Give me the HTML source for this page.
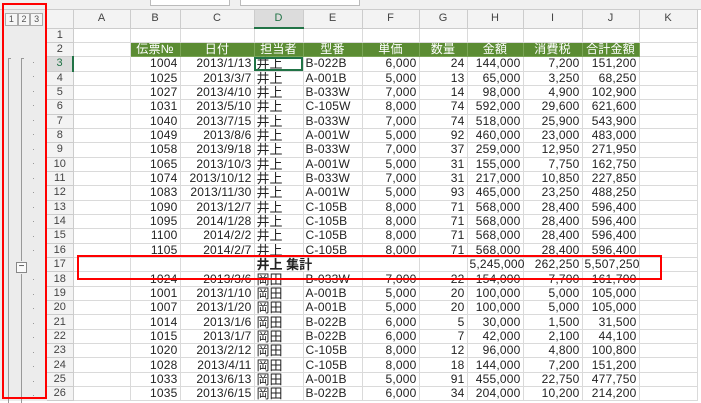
<!DOCTYPE html><html><head><meta charset="utf-8"><style>
*{margin:0;padding:0;box-sizing:border-box}
body{width:701px;height:401px;overflow:hidden;background:#fff;position:relative;font-family:"Liberation Sans","Noto Sans CJK JP",sans-serif;font-size:12px;color:#222}
#top{position:absolute;left:0;top:0;width:701px;height:10px;background:#f0f0f0;border-bottom:1px solid #ccc}
#pane{position:absolute;left:0;top:10px;width:47px;height:391px;background:#ececec}
table{position:absolute;left:47px;top:10px;width:650px;border-collapse:collapse;table-layout:fixed}
td{border-right:1px solid #dadada;border-bottom:1px solid #dadada;height:14.35px;padding:0 2px;white-space:nowrap;overflow:visible;text-align:right;line-height:13px;letter-spacing:0.2px}
tr.h td{height:18px;background:#f3f3f3;text-align:center;color:#444;border-color:#ccc;font-size:11px;letter-spacing:0}
td.rh{background:#f3f3f3;text-align:center;color:#444;border-color:#ccc;font-size:11px;letter-spacing:0}
tr.g td.c{background:#5b8c33;color:#fff;text-align:center;border-color:#7aa556;font-size:12px}
td.d{text-align:left;font-size:13px;letter-spacing:0}
td.e{text-align:left}
.red{position:absolute;border:2px solid #f00}
.dot{position:absolute;left:33px;width:1px;height:1px;background:#999}
</style></head><body>
<div id="top"><div style="position:absolute;left:240px;top:0;width:120px;height:6px;border:1px solid #bbb;border-top:0;background:#fff"></div><div style="position:absolute;left:150px;top:0;width:80px;height:6px;border:1px solid #bbb;border-top:0;background:#fff"></div></div>
<div id="pane">
<div style="position:absolute;left:5px;top:3px;width:38px;height:13px;font-size:9px;color:#555;display:flex"><span style="flex:1;border:1px solid #aaa;text-align:center;background:#f6f6f6">1</span><span style="flex:1;border:1px solid #aaa;text-align:center;background:#f6f6f6">2</span><span style="flex:1;border:1px solid #aaa;text-align:center;background:#f6f6f6">3</span></div>
<div style="position:absolute;left:8px;top:48px;width:3px;height:345px;border-left:1px solid #999;border-top:1px solid #999"></div>
<div style="position:absolute;left:21px;top:48px;width:3px;height:203px;border-left:1px solid #999;border-top:1px solid #999"></div>
<div style="position:absolute;left:16px;top:252px;width:11px;height:11px;border:1px solid #888;background:#fafafa;font-size:10px;line-height:8px;text-align:center">−</div>
<div style="position:absolute;left:21px;top:264px;width:1px;height:129px;background:#999"></div>
<div class="dot" style="top:52px"></div><div class="dot" style="top:66px"></div><div class="dot" style="top:81px"></div><div class="dot" style="top:95px"></div><div class="dot" style="top:110px"></div><div class="dot" style="top:124px"></div><div class="dot" style="top:139px"></div><div class="dot" style="top:153px"></div><div class="dot" style="top:168px"></div><div class="dot" style="top:182px"></div><div class="dot" style="top:197px"></div><div class="dot" style="top:211px"></div><div class="dot" style="top:226px"></div><div class="dot" style="top:240px"></div><div class="dot" style="top:269px"></div><div class="dot" style="top:284px"></div><div class="dot" style="top:298px"></div><div class="dot" style="top:313px"></div><div class="dot" style="top:327px"></div><div class="dot" style="top:342px"></div><div class="dot" style="top:356px"></div><div class="dot" style="top:371px"></div><div class="dot" style="top:385px"></div>
</div>
<table>
<colgroup><col style="width:26px"><col style="width:57px"><col style="width:50px"><col style="width:74px"><col style="width:49px"><col style="width:59px"><col style="width:57px"><col style="width:48px"><col style="width:56px"><col style="width:59px"><col style="width:57px"><col style="width:58px"></colgroup>
<tr class="h"><td></td><td>A</td><td>B</td><td>C</td><td style="background:#dcdcdc;border-bottom:2px solid #217346;color:#217346">D</td><td>E</td><td>F</td><td>G</td><td>H</td><td>I</td><td>J</td><td>K</td></tr>
<tr><td class="rh">1</td><td></td><td></td><td></td><td></td><td></td><td></td><td></td><td></td><td></td><td></td><td></td></tr>
<tr class="g"><td class="rh">2</td><td></td><td class="c">伝票№</td><td class="c">日付</td><td class="c">担当者</td><td class="c">型番</td><td class="c">単価</td><td class="c">数量</td><td class="c">金額</td><td class="c">消費税</td><td class="c">合計金額</td><td></td></tr>
<tr><td class="rh" style="background:#dcdcdc;color:#217346;border-right:2px solid #217346">3</td><td></td><td>1004</td><td>2013/1/13</td><td class="d" style="outline:2px solid #217346;outline-offset:-2px">井上</td><td class="e">B-022B</td><td>6,000</td><td>24</td><td>144,000</td><td>7,200</td><td>151,200</td><td></td></tr>
<tr><td class="rh">4</td><td></td><td>1025</td><td>2013/3/7</td><td class="d">井上</td><td class="e">A-001B</td><td>5,000</td><td>13</td><td>65,000</td><td>3,250</td><td>68,250</td><td></td></tr>
<tr><td class="rh">5</td><td></td><td>1027</td><td>2013/4/10</td><td class="d">井上</td><td class="e">B-033W</td><td>7,000</td><td>14</td><td>98,000</td><td>4,900</td><td>102,900</td><td></td></tr>
<tr><td class="rh">6</td><td></td><td>1031</td><td>2013/5/10</td><td class="d">井上</td><td class="e">C-105W</td><td>8,000</td><td>74</td><td>592,000</td><td>29,600</td><td>621,600</td><td></td></tr>
<tr><td class="rh">7</td><td></td><td>1040</td><td>2013/7/15</td><td class="d">井上</td><td class="e">B-033W</td><td>7,000</td><td>74</td><td>518,000</td><td>25,900</td><td>543,900</td><td></td></tr>
<tr><td class="rh">8</td><td></td><td>1049</td><td>2013/8/6</td><td class="d">井上</td><td class="e">A-001W</td><td>5,000</td><td>92</td><td>460,000</td><td>23,000</td><td>483,000</td><td></td></tr>
<tr><td class="rh">9</td><td></td><td>1058</td><td>2013/9/18</td><td class="d">井上</td><td class="e">B-033W</td><td>7,000</td><td>37</td><td>259,000</td><td>12,950</td><td>271,950</td><td></td></tr>
<tr><td class="rh">10</td><td></td><td>1065</td><td>2013/10/3</td><td class="d">井上</td><td class="e">A-001W</td><td>5,000</td><td>31</td><td>155,000</td><td>7,750</td><td>162,750</td><td></td></tr>
<tr><td class="rh">11</td><td></td><td>1074</td><td>2013/10/12</td><td class="d">井上</td><td class="e">B-033W</td><td>7,000</td><td>31</td><td>217,000</td><td>10,850</td><td>227,850</td><td></td></tr>
<tr><td class="rh">12</td><td></td><td>1083</td><td>2013/11/30</td><td class="d">井上</td><td class="e">A-001W</td><td>5,000</td><td>93</td><td>465,000</td><td>23,250</td><td>488,250</td><td></td></tr>
<tr><td class="rh">13</td><td></td><td>1090</td><td>2013/12/7</td><td class="d">井上</td><td class="e">C-105B</td><td>8,000</td><td>71</td><td>568,000</td><td>28,400</td><td>596,400</td><td></td></tr>
<tr><td class="rh">14</td><td></td><td>1095</td><td>2014/1/28</td><td class="d">井上</td><td class="e">C-105B</td><td>8,000</td><td>71</td><td>568,000</td><td>28,400</td><td>596,400</td><td></td></tr>
<tr><td class="rh">15</td><td></td><td>1100</td><td>2014/2/2</td><td class="d">井上</td><td class="e">C-105B</td><td>8,000</td><td>71</td><td>568,000</td><td>28,400</td><td>596,400</td><td></td></tr>
<tr><td class="rh">16</td><td></td><td>1105</td><td>2014/2/7</td><td class="d">井上</td><td class="e">C-105B</td><td>8,000</td><td>71</td><td>568,000</td><td>28,400</td><td>596,400</td><td></td></tr>
<tr><td class="rh">17</td><td></td><td></td><td></td><td class="d" style="font-weight:bold;border-right:0">井上 集計</td><td></td><td></td><td></td><td>5,245,000</td><td>262,250</td><td>5,507,250</td><td></td></tr>
<tr><td class="rh">18</td><td></td><td>1024</td><td>2013/3/6</td><td class="d">岡田</td><td class="e">B-033W</td><td>7,000</td><td>22</td><td>154,000</td><td>7,700</td><td>161,700</td><td></td></tr>
<tr><td class="rh">19</td><td></td><td>1001</td><td>2013/1/10</td><td class="d">岡田</td><td class="e">A-001B</td><td>5,000</td><td>20</td><td>100,000</td><td>5,000</td><td>105,000</td><td></td></tr>
<tr><td class="rh">20</td><td></td><td>1007</td><td>2013/1/20</td><td class="d">岡田</td><td class="e">A-001B</td><td>5,000</td><td>20</td><td>100,000</td><td>5,000</td><td>105,000</td><td></td></tr>
<tr><td class="rh">21</td><td></td><td>1014</td><td>2013/1/6</td><td class="d">岡田</td><td class="e">B-022B</td><td>6,000</td><td>5</td><td>30,000</td><td>1,500</td><td>31,500</td><td></td></tr>
<tr><td class="rh">22</td><td></td><td>1015</td><td>2013/1/7</td><td class="d">岡田</td><td class="e">B-022B</td><td>6,000</td><td>7</td><td>42,000</td><td>2,100</td><td>44,100</td><td></td></tr>
<tr><td class="rh">23</td><td></td><td>1020</td><td>2013/2/12</td><td class="d">岡田</td><td class="e">C-105B</td><td>8,000</td><td>12</td><td>96,000</td><td>4,800</td><td>100,800</td><td></td></tr>
<tr><td class="rh">24</td><td></td><td>1028</td><td>2013/4/11</td><td class="d">岡田</td><td class="e">C-105B</td><td>8,000</td><td>18</td><td>144,000</td><td>7,200</td><td>151,200</td><td></td></tr>
<tr><td class="rh">25</td><td></td><td>1033</td><td>2013/6/13</td><td class="d">岡田</td><td class="e">A-001B</td><td>5,000</td><td>91</td><td>455,000</td><td>22,750</td><td>477,750</td><td></td></tr>
<tr><td class="rh">26</td><td></td><td>1035</td><td>2013/6/15</td><td class="d">岡田</td><td class="e">B-022B</td><td>6,000</td><td>34</td><td>204,000</td><td>10,200</td><td>214,200</td><td></td></tr>
</table>
<div class="red" style="left:2px;top:3px;width:45px;height:396px"></div>
<div class="red" style="left:77px;top:255px;width:585px;height:25px"></div>
</body></html>
